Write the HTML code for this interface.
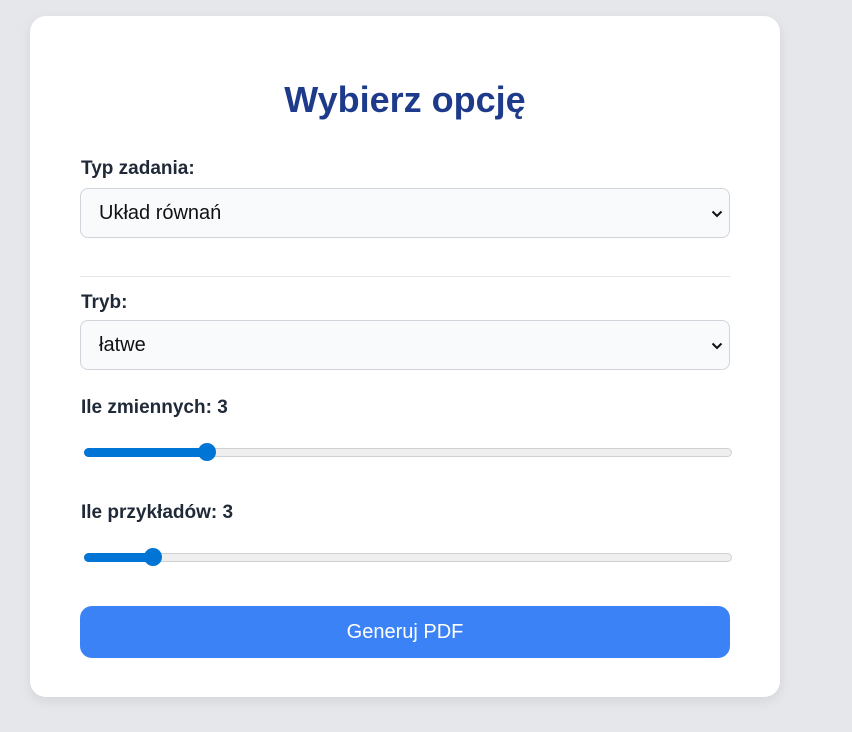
<!DOCTYPE html>
<html><head><meta charset="utf-8"><style>
body{margin:0;width:852px;height:732px;background:#e5e7eb;font-family:"Liberation Sans",Arial,sans-serif;position:relative;overflow:hidden}
.card{position:absolute;left:30px;top:16px;width:750px;height:681px;background:#fff;border-radius:16px;box-shadow:0 4px 12px rgba(0,0,0,0.08)}
.a{position:absolute}
h1{position:absolute;left:0;width:810px;text-align:center;top:79px;margin:0;font-size:36px;color:#1e3a8a;font-weight:bold}
.lbl{position:absolute;left:81px;font-size:19px;font-weight:bold;color:#1f2937}
.sel{position:absolute;left:80px;height:50px;background:#f8fafc;border:1px solid #d1d5db;border-radius:8px;font-size:20px;color:#111;box-sizing:border-box}
.sel span{position:absolute;left:18px;top:13px}
.sel svg{position:absolute;right:6px;top:20px}
.track{position:absolute;left:84px;width:648px;height:9px;background:#efefef;border:1px solid #d0d0d0;border-radius:5px;box-sizing:border-box}
.fill{position:absolute;left:84px;height:9px;background:#0075d6;border-radius:5px}
.thumb{position:absolute;width:18px;height:18px;border-radius:50%;background:#0075d6}
.btn{position:absolute;left:80px;top:606px;width:650px;height:52px;background:#3b82f6;border-radius:12px;color:#fff;font-size:20px;text-align:center;line-height:52px}
</style></head><body>
<div class="card"></div>
<h1>Wybierz opcję</h1>
<div class="lbl" style="top:158px">Typ zadania:</div>
<div class="sel" style="top:188px;width:650px"><span>Układ równań</span><svg width="12" height="10" viewBox="0 0 12 10"><path d="M1.5 2.5 L6 7 L10.5 2.5" stroke="#111" stroke-width="2" fill="none"/></svg></div>
<div class="a" style="left:80px;top:276px;width:650px;height:1px;background:#e5e7eb"></div>
<div class="lbl" style="top:292px">Tryb:</div>
<div class="sel" style="top:320px;width:650px"><span>łatwe</span><svg width="12" height="10" viewBox="0 0 12 10"><path d="M1.5 2.5 L6 7 L10.5 2.5" stroke="#111" stroke-width="2" fill="none"/></svg></div>
<div class="lbl" style="top:397px">Ile zmiennych: 3</div>
<div class="track" style="top:448px"></div>
<div class="fill" style="top:448px;width:125px"></div>
<div class="thumb" style="left:198px;top:443px"></div>
<div class="lbl" style="top:502px">Ile przykładów: 3</div>
<div class="track" style="top:553px"></div>
<div class="fill" style="top:553px;width:70px"></div>
<div class="thumb" style="left:144px;top:548px"></div>
<div class="btn">Generuj PDF</div>
</body></html>
